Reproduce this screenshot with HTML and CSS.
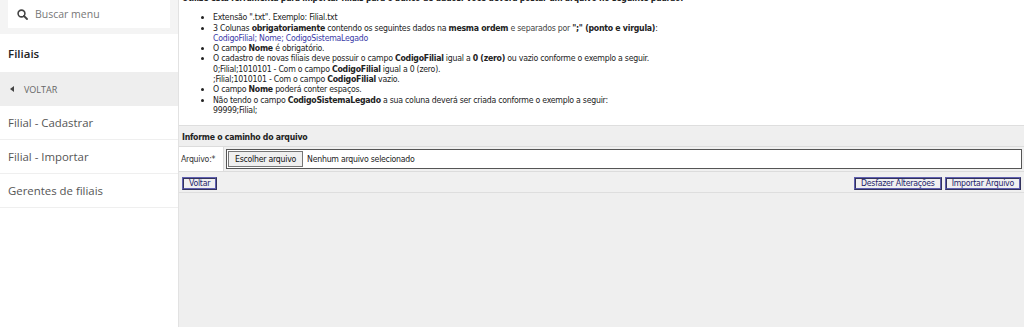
FILE: index.html
```html
<!DOCTYPE html>
<html lang="pt-BR">
<head>
<meta charset="utf-8">
<title>Filial - Importar</title>
<link rel="stylesheet" href="styles.css">
</head>
<body>
<div class="app">
  <aside class="sidebar">
    <div class="search-wrap">
      <div class="search">
        <svg class="search-icon" width="11" height="11" viewBox="0 0 11 11"><circle cx="4.5" cy="4.5" r="3.4" fill="none" stroke="#444" stroke-width="1.6"/><line x1="7" y1="7" x2="10" y2="10" stroke="#444" stroke-width="1.8" stroke-linecap="round"/></svg>
        <span class="search-text">Buscar menu</span>
      </div>
    </div>
    <div class="menu-title">Filiais</div>
    <div class="menu-back"><span class="tri"></span><span>VOLTAR</span></div>
    <div class="menu-item">Filial - Cadastrar</div>
    <div class="menu-item">Filial - Importar</div>
    <div class="menu-item">Gerentes de filiais</div>
  </aside>
  <main class="main">
    <div class="info">
      <p class="intro">Utilize esta ferramenta para importar filiais para o banco de dados. Você deverá postar um arquivo no seguinte padrão:</p>
      <ul class="rules">
        <li>Extensão ".txt". Exemplo: Filial.txt</li>
        <li>3 Colunas <b>obrigatoriamente</b> contendo os seguintes dados na <b>mesma ordem</b> <span class="soft">e separados por</span> <b>";" (ponto e virgula)</b>:<br><span class="blue">CodigoFilial; Nome; CodigoSistemaLegado</span></li>
        <li>O campo <b>Nome</b> é obrigatório.</li>
        <li>O cadastro de novas filiais deve possuir o campo <b>CodigoFilial</b> igual a <b>0 (zero)</b> ou vazio conforme o exemplo a seguir.<br>0;Filial;1010101 - Com o campo <b>CodigoFilial</b> igual a 0 (zero).<br>;Filial;1010101 - Com o campo <b>CodigoFilial</b> vazio.</li>
        <li>O campo <b>Nome</b> poderá conter espaços.</li>
        <li>Não tendo o campo <b>CodigoSistemaLegado</b> a sua coluna deverá ser criada conforme o exemplo a seguir:<br>99999;Filial;</li>
      </ul>
    </div>
    <div class="form">
      <div class="form-head">Informe o caminho do arquivo</div>
      <div class="form-row">
        <div class="label">Arquivo:*</div>
        <div class="file">
          <span class="file-btn">Escolher arquivo</span>
          <span class="file-name">Nenhum arquivo selecionado</span>
        </div>
      </div>
      <div class="actions">
        <button class="btn">Voltar</button>
        <div class="actions-right">
          <button class="btn">Desfazer Alterações</button>
          <button class="btn">Importar Arquivo</button>
        </div>
      </div>
    </div>
    <div class="rest"></div>
  </main>
</div>
</body>
</html>
```
FILE: styles.css
```css
* { box-sizing: border-box; }
html, body { margin: 0; padding: 0; height: 100%; }
body { background: #fff; overflow: hidden; }
.app { display: flex; height: 327px; }

.sidebar {
  width: 179px;
  flex: none;
  background: #fff;
  border-right: 1px solid #e2e2e2;
  font-family: "Open Sans", sans-serif;
  display: flex;
  flex-direction: column;
}
.search-wrap { background: #f4f4f4; padding: 0 8px 5px 8px; height: 34px; }
.search { background: #fff; height: 28px; display: flex; align-items: center; padding-left: 9px; }
.search-icon { margin-right: 7px; }
.search-text { font-size: 10.5px; color: #777; }
.menu-title { height: 38px; display: flex; align-items: center; padding-left: 8px; font-size: 11.5px; font-weight: 600; color: #222; }
.menu-back { height: 34px; background: #eeeeee; display: flex; align-items: center; padding-left: 10px; font-size: 9px; color: #666; }
.tri { width: 0; height: 0; border-top: 3.5px solid transparent; border-bottom: 3.5px solid transparent; border-right: 4px solid #444; margin-right: 10px; }
.menu-item { height: 34px; display: flex; align-items: center; padding-left: 8px; font-size: 11.4px; color: #555; border-bottom: 1px solid #efefef; }

.main {
  flex: 1;
  display: flex;
  flex-direction: column;
  font-family: "DejaVu Sans Condensed", "Liberation Sans", sans-serif;
  font-size: 8.7px;
  letter-spacing: -0.25px;
  color: #222;
  min-width: 0;
}
.info { background: #fff; padding: 0 3px 10px 3px; height: 125px; }
.intro { margin: -7px 0 0 0; font-weight: bold; line-height: 10.3px; }
.rules { margin: 9px 0 0 0; padding-left: 31px; line-height: 10.3px; }
.rules li { padding: 0; }
.blue { color: #3a3aa8; }
.soft { color: #444; }

.form { background: #f0f0f0; border-top: 1px solid #dedede; padding: 1px 0 0 0; }
.form-head { height: 20px; display: flex; align-items: center; padding-left: 3px; font-weight: bold; background: #efefef; border-bottom: 1px solid #dcdcdc; }
.form-row { display: flex; align-items: stretch; height: 25px; border-bottom: 1px solid #dcdcdc; }
.label { width: 45px; background: #fff; display: flex; align-items: center; padding-left: 2px; border-right: 1px solid #dcdcdc; color: #333; }
.file { flex: 1; margin: 2px; background: #fff; border: 1px solid #555; display: flex; align-items: center; padding-left: 1px; }
.file-btn { background: #efefef; border: 1px solid #767676; padding: 1px 6px; height: 16px; display: flex; align-items: center; color: #111; }
.file-name { margin-left: 4px; color: #222; }
.actions { display: flex; justify-content: space-between; align-items: center; height: 21px; padding: 2px 3px 0 3px; border-bottom: 1px solid #dedede; }
.actions-right { display: flex; gap: 3px; }
.btn { font-family: "DejaVu Sans Condensed", "Liberation Sans", sans-serif; font-size: 8.7px; letter-spacing: -0.25px; color: #23236a; background: #f0f0f0; border: 2px ridge #6060b0; height: 13px; padding: 0 5px; line-height: 9px; margin: 0; }
.rest { flex: 1; background: #efefef; }
```
